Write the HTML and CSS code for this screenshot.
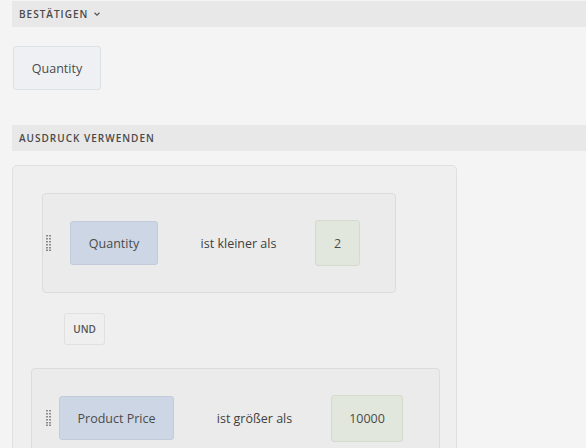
FILE: index.html
```html
<!DOCTYPE html>
<html lang="de">
<head>
<meta charset="utf-8">
<link rel="stylesheet" href="styles.css">
</head>
<body>
<div class="page">
  <div class="section-head">BESTÄTIGEN <svg class="chev" width="8" height="6" viewBox="0 0 8 6"><path d="M1.5 1.8 L4 4.2 L6.5 1.8" fill="none" stroke="#555" stroke-width="1.2"/></svg></div>
  <div class="chip">Quantity</div>
  <div class="section-head">AUSDRUCK VERWENDEN</div>
  <div class="expr">
    <div class="cond cond-a">
      <svg class="grip" width="5" height="16" viewBox="0 0 5 16"><g fill="#8a8a8a"><rect x="0" y="0" width="2" height="1.5"/><rect x="3" y="0" width="2" height="1.5"/><rect x="0" y="3" width="2" height="1.5"/><rect x="3" y="3" width="2" height="1.5"/><rect x="0" y="6" width="2" height="1.5"/><rect x="3" y="6" width="2" height="1.5"/><rect x="0" y="9" width="2" height="1.5"/><rect x="3" y="9" width="2" height="1.5"/><rect x="0" y="12" width="2" height="1.5"/><rect x="3" y="12" width="2" height="1.5"/><rect x="0" y="14.5" width="2" height="1.5"/><rect x="3" y="14.5" width="2" height="1.5"/></g></svg>
      <div class="field field-a">Quantity</div>
      <div class="op">ist kleiner als</div>
      <div class="val val-a">2</div>
    </div>
    <div class="und">UND</div>
    <div class="cond cond-b">
      <svg class="grip" width="5" height="16" viewBox="0 0 5 16"><g fill="#8a8a8a"><rect x="0" y="0" width="2" height="1.5"/><rect x="3" y="0" width="2" height="1.5"/><rect x="0" y="3" width="2" height="1.5"/><rect x="3" y="3" width="2" height="1.5"/><rect x="0" y="6" width="2" height="1.5"/><rect x="3" y="6" width="2" height="1.5"/><rect x="0" y="9" width="2" height="1.5"/><rect x="3" y="9" width="2" height="1.5"/><rect x="0" y="12" width="2" height="1.5"/><rect x="3" y="12" width="2" height="1.5"/><rect x="0" y="14.5" width="2" height="1.5"/><rect x="3" y="14.5" width="2" height="1.5"/></g></svg>
      <div class="field field-b">Product Price</div>
      <div class="op">ist größer als</div>
      <div class="val val-b">10000</div>
    </div>
  </div>
</div>
</body>
</html>
```
FILE: styles.css
```css
* { box-sizing: border-box; }
html, body { margin: 0; padding: 0; background: #f4f4f4; overflow: hidden; }
body {
  font-family: "Open Sans", "Noto Sans", sans-serif;
  color: #4b4b4b;
  font-size: 12px;
  width: 586px;
  height: 448px;
}
.page {
  height: 448px;
  overflow: hidden;
  padding: 1px 0 0 12px;
  display: flex;
  flex-direction: column;
  align-items: flex-start;
}
.page > * { flex-shrink: 0; }
.section-head {
  align-self: stretch;
  height: 26px;
  background: #e8e8e8;
  padding-left: 7px;
  display: flex;
  align-items: center;
  font-size: 10px;
  font-weight: 600;
  letter-spacing: 1px;
  color: #4a4a4a;
}
.chev { margin-left: 5px; }
.chip {
  margin: 19px 0 35px 1px;
  width: 88px;
  height: 44px;
  background: #eef0f4;
  border: 1px solid #dde0e5;
  border-radius: 3px;
  display: flex;
  align-items: center;
  justify-content: center;
  font-size: 12.5px;
}
.expr {
  margin-top: 14px;
  width: 445px;
  height: 340px;
  background: #efefef;
  border: 1px solid #e0e0e0;
  border-radius: 5px;
  display: flex;
  flex-direction: column;
  align-items: flex-start;
}
.expr > * { flex-shrink: 0; }
.cond {
  height: 100px;
  background: #ebebeb;
  border: 1px solid #dcdcdc;
  border-radius: 4px;
  display: flex;
  align-items: center;
}
.cond-a { margin: 27px 0 0 29px; width: 354px; padding-left: 3px; }
.cond-b { margin: 23px 0 0 18px; width: 409px; padding-left: 14px; }
.grip { flex-shrink: 0; }
.cond-a .grip { margin-right: 19px; }
.cond-b .grip { margin-right: 8px; }
.field {
  height: 44px;
  background: #cdd6e4;
  border: 1px solid #c1cbda;
  border-radius: 3px;
  display: flex;
  align-items: center;
  justify-content: center;
  font-size: 12.5px;
}
.field-a { width: 88px; }
.field-b { width: 115px; }
.op {
  width: 157px;
  padding-left: 4px;
  text-align: center;
  font-size: 12.5px;
  color: #3f3f3f;
}
.val {
  background: #e2e7dd;
  border: 1px solid #d4dbcd;
  border-radius: 3px;
  display: flex;
  align-items: center;
  justify-content: center;
  font-size: 12.5px;
}
.val-a { width: 45px; height: 46px; }
.val-b { width: 72px; height: 47px; }
.und {
  margin: 20px 0 0 51px;
  width: 41px;
  height: 32px;
  background: #efefef;
  border: 1px solid #e0e0e0;
  border-radius: 3px;
  display: flex;
  align-items: center;
  justify-content: center;
  font-size: 10px;
  font-weight: 600;
  color: #555;
}
```
